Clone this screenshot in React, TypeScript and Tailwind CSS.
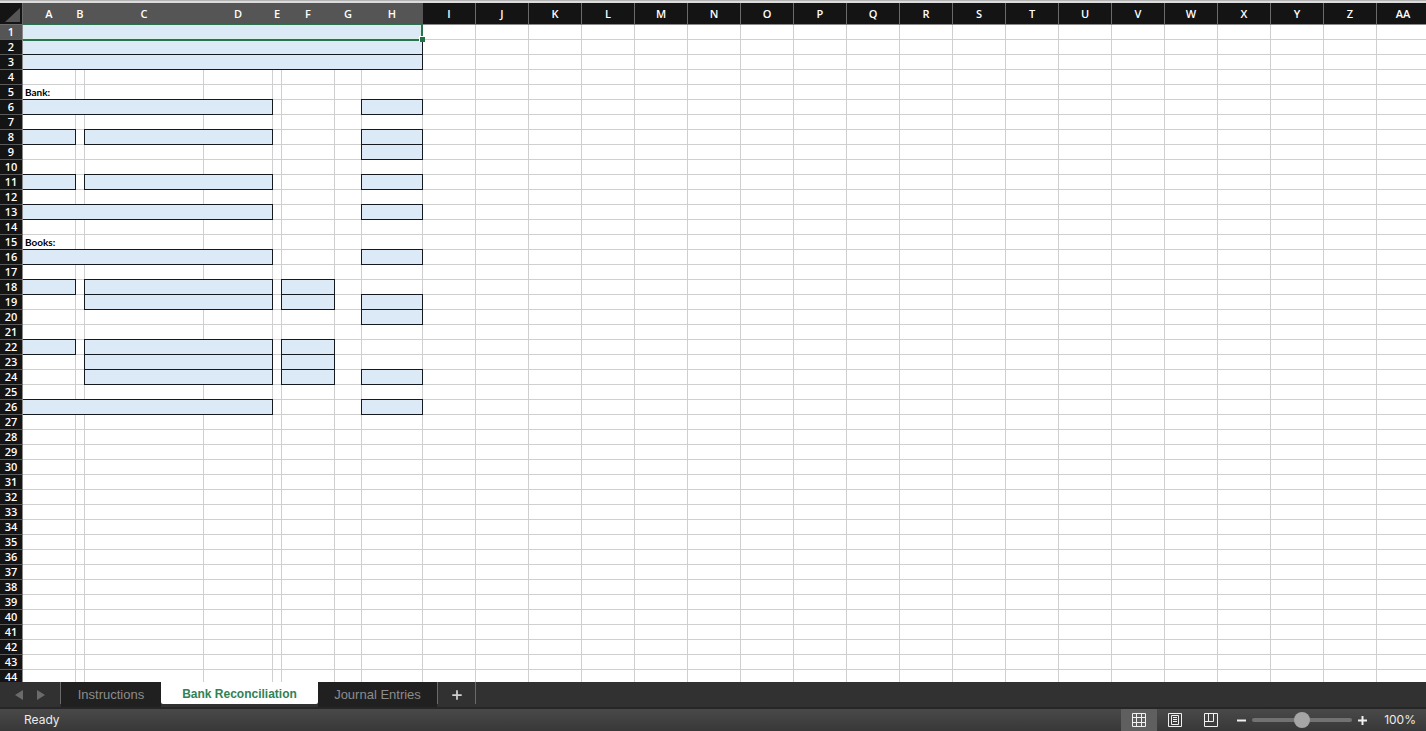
import { useState } from "react";
import { Plus } from "lucide-react";
import clsx from "clsx";

type Range = { row: number; from: number; to: number };

const ROW_COUNT = 44;

const columns = [
  { label: "A", width: "w-[53px]" },
  { label: "B", width: "w-[9px]" },
  { label: "C", width: "w-[119px]" },
  { label: "D", width: "w-[69px]" },
  { label: "E", width: "w-[9px]" },
  { label: "F", width: "w-[53px]" },
  { label: "G", width: "w-[27px]" },
  { label: "H", width: "w-[61px]" },
  ..."IJKLMNOPQRSTUVWXYZ".split("").map((label) => ({ label, width: "w-[53px]" })),
  // last column takes whatever is left of the window
  { label: "AA", width: "" },
];

// merged and single input cells, as zero-based column ranges
const inputs: Range[] = [
  { row: 1, from: 0, to: 7 },
  { row: 2, from: 0, to: 7 },
  { row: 3, from: 0, to: 7 },
  { row: 6, from: 0, to: 3 },
  { row: 6, from: 7, to: 7 },
  { row: 8, from: 0, to: 0 },
  { row: 8, from: 2, to: 3 },
  { row: 8, from: 7, to: 7 },
  { row: 9, from: 7, to: 7 },
  { row: 11, from: 0, to: 0 },
  { row: 11, from: 2, to: 3 },
  { row: 11, from: 7, to: 7 },
  { row: 13, from: 0, to: 3 },
  { row: 13, from: 7, to: 7 },
  { row: 16, from: 0, to: 3 },
  { row: 16, from: 7, to: 7 },
  { row: 18, from: 0, to: 0 },
  { row: 18, from: 2, to: 3 },
  { row: 18, from: 5, to: 5 },
  { row: 19, from: 2, to: 3 },
  { row: 19, from: 5, to: 5 },
  { row: 19, from: 7, to: 7 },
  { row: 20, from: 7, to: 7 },
  { row: 22, from: 0, to: 0 },
  { row: 22, from: 2, to: 3 },
  { row: 22, from: 5, to: 5 },
  { row: 23, from: 2, to: 3 },
  { row: 23, from: 5, to: 5 },
  { row: 24, from: 2, to: 3 },
  { row: 24, from: 5, to: 5 },
  { row: 24, from: 7, to: 7 },
  { row: 26, from: 0, to: 3 },
  { row: 26, from: 7, to: 7 },
];

const labels: Record<number, string> = { 5: "Bank:", 15: "Books:" };

function findInput(row: number, col: number) {
  return inputs.find((r) => r.row === row && col >= r.from && col <= r.to);
}

function SheetRow({ row }: { row: number }) {
  const cells = [];
  for (let col = 0; col < columns.length; col++) {
    const input = findInput(row, col);
    const last = input ? input.to : col;
    const active = row === 1 && col === 0;
    const text = col === 0 ? labels[row] : undefined;
    cells.push(
      <td
        key={col}
        colSpan={last - col + 1}
        className={clsx(
          "h-[15px] border-r border-b p-0",
          input ? "relative border-[#151a20] bg-[#dce9f6]" : "border-[#cfcfcf] bg-white",
          // top and left edges are drawn over the neighbouring grid lines
          input && !active && col === 0 && "shadow-[0_-1px_#151a20]",
          input && col > 0 && "shadow-[0_-1px_#151a20,-1px_0_#151a20,-1px_-1px_#151a20]",
          active && "z-10"
        )}
      >
        {text && (
          <div className="pl-0.5 font-[Lato,sans-serif] text-[10px] leading-[14px] font-bold text-black">
            {text}
          </div>
        )}
        {active && (
          <>
            <div className="absolute -top-px -right-px -bottom-0.5 left-0 border-t border-r-2 border-b-2 border-[#2b7350] bg-[#dce9f6] shadow-[inset_0_0_2px_1px_#d6f3e6]" />
            <div className="absolute -right-[3px] -bottom-[3px] size-[6px] border-t border-l border-white bg-[#217346]" />
          </>
        )}
      </td>
    );
    col = last;
  }
  return (
    <tr>
      <th
        scope="row"
        className={clsx(
          "h-[15px] border-r border-b border-r-[#8a8a8a] border-b-[#5a5a5a] p-0 text-[11px] leading-[14px] font-semibold",
          row === 1 ? "bg-[#555555]" : "bg-[#141414]"
        )}
      >
        {row}
      </th>
      {cells}
    </tr>
  );
}

function Sheet() {
  return (
    <table className="w-full min-w-[1430px] table-fixed border-separate border-spacing-0 font-['Open_Sans',sans-serif] text-white">
      <colgroup>
        <col className="w-[23px]" />
        {columns.map((c) => (
          <col key={c.label} className={c.width} />
        ))}
      </colgroup>
      <thead>
        <tr>
          <td className="h-[22px] border-r border-b border-[#6a6a6a] bg-[#141414] p-0">
            <svg viewBox="0 0 22 21" className="block h-[21px] w-[22px]">
              <path d="M20 5v14H5z" fill="#555" />
            </svg>
          </td>
          {columns.map((c, i) => (
            <th
              key={c.label}
              scope="col"
              className={clsx(
                "h-[22px] border-r border-b p-0 text-[11px] leading-[21px] font-semibold",
                i < 8
                  ? "border-r-[#555555] border-b-[#2b7350] bg-[#555555]"
                  : "border-r-[#6a6a6a] border-b-[#8a8a8a] bg-[#141414]"
              )}
            >
              <div className="flex justify-center">{c.label}</div>
            </th>
          ))}
        </tr>
      </thead>
      <tbody>
        {Array.from({ length: ROW_COUNT }, (_, i) => (
          <SheetRow key={i} row={i + 1} />
        ))}
      </tbody>
    </table>
  );
}

function TabBar() {
  return (
    <nav
      aria-label="Sheets"
      className="flex h-[27px] shrink-0 items-start border-b-2 border-[#262626] bg-[#313131] font-['Liberation_Sans',sans-serif] text-[13px] leading-[24px]"
    >
      <div className="flex h-[22px] w-[61px] items-center justify-center gap-3 border-r border-[#6a6a6a] pt-1">
        <button type="button" aria-label="Previous sheet">
          <svg viewBox="0 0 10 12" className="block h-3 w-2.5">
            <path d="M9 1v10L1 6z" fill="#6b6b6b" />
          </svg>
        </button>
        <button type="button" aria-label="Next sheet">
          <svg viewBox="0 0 10 12" className="block h-3 w-2.5">
            <path d="M1 1v10l8-5z" fill="#6b6b6b" />
          </svg>
        </button>
      </div>
      <button type="button" className="h-[25px] w-[100px] bg-[#202020] text-[#8c8c8c]">
        Instructions
      </button>
      <button
        type="button"
        aria-current="page"
        className="h-[22px] w-[157px] rounded-b-xs bg-white pt-0.5 text-xs font-bold text-[#2f8254]"
      >
        Bank Reconciliation
      </button>
      <button type="button" className="h-[25px] w-[119px] bg-[#202020] text-[#8c8c8c]">
        Journal Entries
      </button>
      <button
        type="button"
        aria-label="New sheet"
        className="flex h-[22px] w-[39px] items-center justify-center border-x border-[#6a6a6a] pt-1 text-[#d0d0d0]"
      >
        <Plus size={14} strokeWidth={3} />
      </button>
    </nav>
  );
}

function StatusBar() {
  const [zoom, setZoom] = useState(100);
  return (
    <footer className="flex h-[22px] shrink-0 items-center bg-linear-to-b from-[#494949] to-[#383838] font-[Inter,sans-serif] text-xs text-[#ececec]">
      <span className="flex-1 pl-6">Ready</span>
      <button
        type="button"
        aria-label="Normal view"
        className="flex h-full w-9 items-center justify-center bg-[#5f5f5f]"
      >
        <svg viewBox="0 0 14 14" className="size-3.5" fill="none" stroke="#f0f0f0">
          <path d="M.5 .5h13v13H.5zM4.5 .5v13M9.5 .5v13M.5 4.5h13M.5 9.5h13" />
        </svg>
      </button>
      <button
        type="button"
        aria-label="Page layout"
        className="flex h-full w-9 items-center justify-center"
      >
        <svg viewBox="0 0 14 14" className="size-3.5" fill="none" stroke="#f0f0f0">
          <path d="M.5 .5h13v13H.5zM3.5 2.5h7v9h-7zM5 4.5h4M5 6.5h4M5 8.5h4" />
        </svg>
      </button>
      <button
        type="button"
        aria-label="Page break preview"
        className="flex h-full w-9 items-center justify-center"
      >
        <svg viewBox="0 0 14 14" className="size-3.5" fill="none" stroke="#f0f0f0">
          <path d="M.5 .5h13v13H.5zM4.5 .5v8M9.5 .5v8M.5 8.5h9" />
        </svg>
      </button>
      <button type="button" aria-label="Zoom out" className="ml-1.5 p-0.5">
        <svg viewBox="0 0 9 9" className="size-[9px]" stroke="#f0f0f0" strokeWidth="2">
          <path d="M0 4.5h9" />
        </svg>
      </button>
      <input
        type="range"
        aria-label="Zoom"
        min={0}
        max={200}
        value={zoom}
        onChange={(e) => setZoom(Number(e.target.value))}
        className="mx-1 h-1 w-[100px] appearance-none rounded-full bg-[#727272] [&::-webkit-slider-thumb]:size-4 [&::-webkit-slider-thumb]:appearance-none [&::-webkit-slider-thumb]:rounded-full [&::-webkit-slider-thumb]:bg-[#a6a6a6]"
      />
      <button type="button" aria-label="Zoom in" className="p-0.5">
        <svg viewBox="0 0 9 9" className="size-[9px]" stroke="#f0f0f0" strokeWidth="2">
          <path d="M0 4.5h9M4.5 0v9" />
        </svg>
      </button>
      <span className="w-[57px] pr-2.5 text-right">{zoom}%</span>
    </footer>
  );
}

export default function App() {
  return (
    <div className="flex h-screen flex-col overflow-hidden border-t border-[#b4b4b4] bg-white">
      <main className="min-h-0 flex-1 overflow-hidden border-t-2 border-[#dcdcdc]">
        <Sheet />
      </main>
      <TabBar />
      <StatusBar />
    </div>
  );
}
